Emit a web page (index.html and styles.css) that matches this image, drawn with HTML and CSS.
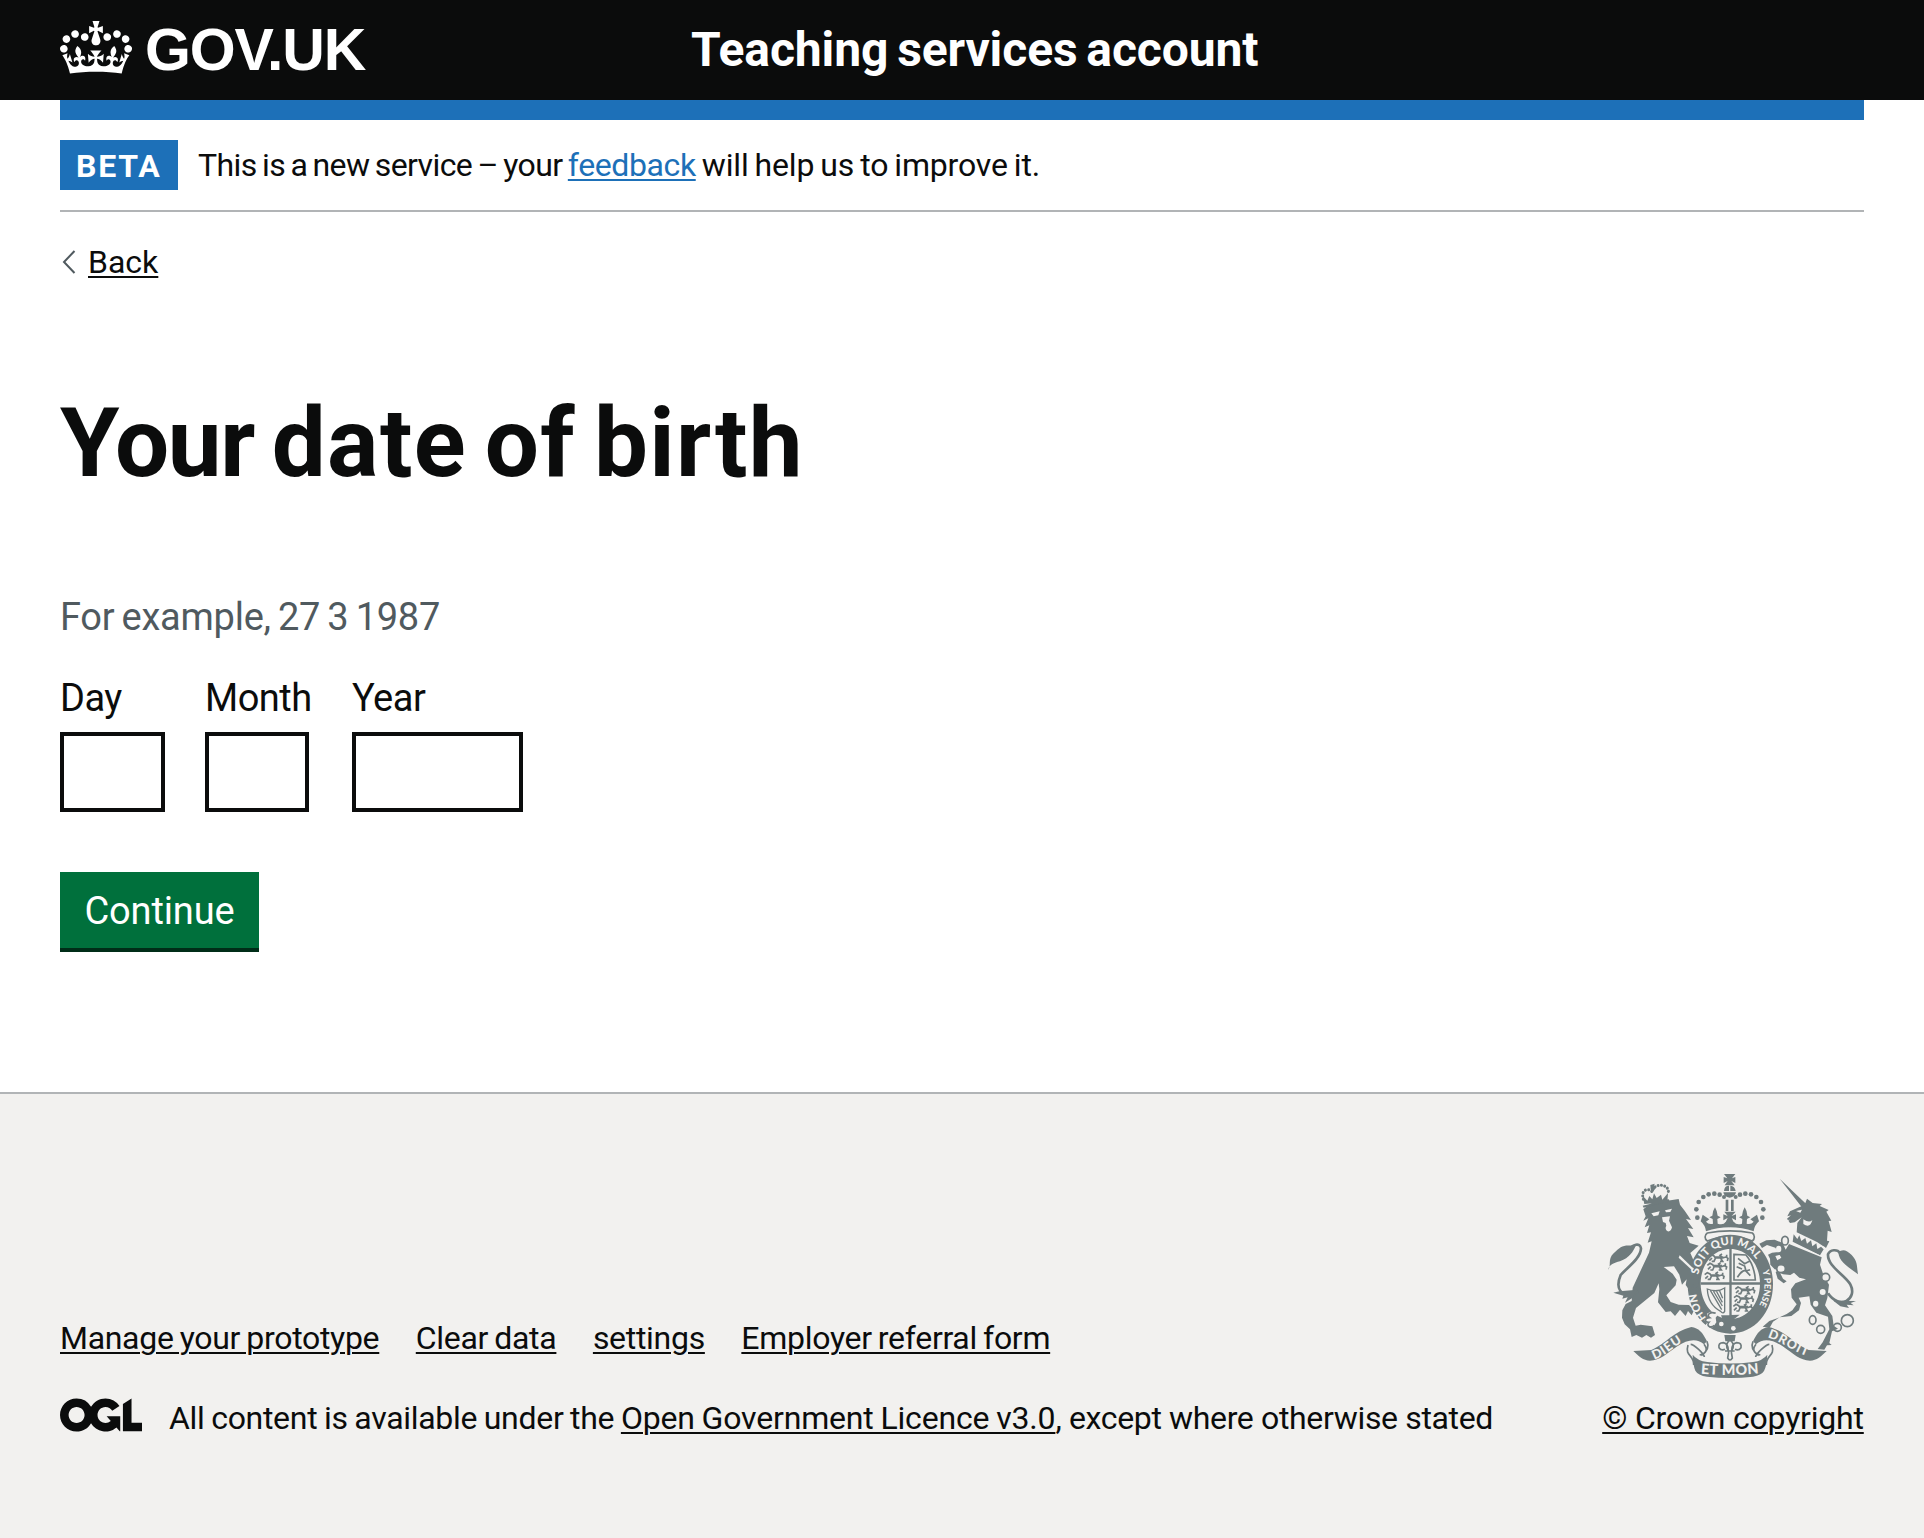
FILE: index.html
```html
<!DOCTYPE html>
<html lang="en">
<head>
<meta charset="utf-8">
<title>Your date of birth – Teaching services account</title>
<link rel="stylesheet" href="styles.css">
</head>
<body>
<header class="header">
  <a class="header-logo" href="#">
    <svg class="header-crown" viewBox="0 0 132 97" aria-hidden="true"><path d="M25 30.2c3.5 1.5 7.7-.2 9.1-3.7 1.5-3.6-.2-7.8-3.9-9.2-3.6-1.4-7.6.3-9.1 3.9-1.4 3.5.3 7.5 3.9 9zM9 39.5c3.6 1.5 7.8-.2 9.2-3.7 1.5-3.6-.2-7.8-3.9-9.1-3.6-1.5-7.6.2-9.1 3.8-1.4 3.5.3 7.5 3.8 9zM4.4 57.2c3.5 1.5 7.7-.2 9.1-3.8 1.5-3.6-.2-7.7-3.9-9.1-3.5-1.5-7.6.3-9.1 3.8-1.4 3.5.3 7.6 3.9 9.1zm38.3-21.4c3.5 1.5 7.7-.2 9.1-3.8 1.5-3.6-.2-7.7-3.9-9.1-3.6-1.5-7.6.3-9.1 3.8-1.3 3.6.4 7.7 3.9 9.1zm64.4-5.6c-3.6 1.5-7.8-.2-9.1-3.7-1.5-3.6.2-7.8 3.8-9.2 3.6-1.4 7.7.3 9.2 3.9 1.3 3.5-.4 7.5-3.9 9zm15.9 9.3c-3.6 1.5-7.7-.2-9.1-3.7-1.5-3.6.2-7.8 3.7-9.1 3.6-1.5 7.7.2 9.2 3.8 1.5 3.5-.3 7.5-3.8 9zm4.7 17.7c-3.6 1.5-7.8-.2-9.2-3.8-1.5-3.6.2-7.7 3.9-9.1 3.6-1.5 7.7.3 9.2 3.8 1.3 3.5-.4 7.6-3.9 9.1zM89.3 35.8c-3.6 1.5-7.8-.2-9.2-3.8-1.4-3.6.2-7.7 3.9-9.1 3.6-1.5 7.7.3 9.2 3.8 1.4 3.6-.3 7.7-3.9 9.1zM69.7 17.7l8.9 4.7V9.3l-8.9 2.8c-.2-.3-.5-.6-.9-.9L72.4 0H59.6l3.5 11.2c-.3.3-.6.5-.9.9l-8.8-2.8v13.1l8.8-4.7c.3.3.6.7.9.9l-5 15.4v.1c-.2.8-.4 1.6-.4 2.4 0 4.1 3.1 7.5 7 8.1h.2c.3 0 .7.1 1 .1.4 0 .7 0 1-.1h.2c4-.6 7.1-4.1 7.1-8.1 0-.8-.1-1.7-.4-2.4V34l-5.1-15.4c.4-.2.7-.6 1-.9zM66 92.8c16.9 0 32.8 1.1 47.1 3.2 4-16.9 8.9-26.7 14-33.5l-9.6-3.4c1 4.9 1.1 7.2 0 10.2-1.5-1.4-3-4.3-4.2-8.7L108.6 76c2.8-2 5-3.2 7.5-3.3-4.4 9.4-10 11.9-13.6 11.2-4.3-.8-6.3-4.6-5.6-7.9 1-4.7 5.7-5.9 8-.5 4.3-8.7-3-11.4-7.6-8.8 7.1-7.2 7.9-13.5 2.1-21.1-8 6.1-8.1 12.3-4.5 20.8-4.7-5.4-12.1-2.5-9.5 6.2 3.4-5.2 7.9-2 7.2 3.1-.6 4.3-6.4 7.8-13.5 7.2-10.3-.9-10.9-8-11.2-13.8 2.5-.5 7.1 1.8 11 7.3L80.2 60c-4.1 4.4-8 5.3-12.3 5.4 1.4-4.4 8-11.6 8-11.6H55.5s6.4 7.2 7.9 11.6c-4.2-.1-8-1-12.3-5.4l1.4 16.4c3.9-5.5 8.5-7.7 10.9-7.3-.3 5.8-.9 12.8-11.1 13.8-7.2.6-12.9-2.9-13.5-7.2-.7-5 3.8-8.3 7.1-3.1 2.7-8.7-4.6-11.6-9.4-6.2 3.7-8.5 3.6-14.7-4.6-20.8-5.8 7.6-5 13.9 2.2 21.1-4.7-2.6-11.9.1-7.7 8.8 2.3-5.5 7.1-4.2 8.1.5.7 3.3-1.3 7.1-5.7 7.9-3.5.7-9-1.8-13.5-11.2 2.5.1 4.7 1.3 7.5 3.3l-4.7-15.4c-1.2 4.4-2.7 7.2-4.3 8.7-1.1-3-.9-5.3 0-10.2l-9.5 3.4c5 6.9 9.9 16.7 14 33.5 14.8-2.1 30.8-3.2 47.7-3.2z"/></svg>
    <span class="header-logotype">GOV.UK</span>
  </a>
  <a class="header-service" href="#">Teaching services account</a>
</header>
<div class="container">
  <div class="phase">
    <strong class="tag">BETA</strong>
    <span class="phase-text">This is a new service – your <a class="link" href="#">feedback</a><span class="phase-end"> will help us to improve it.</span></span>
  </div>
  <a class="back" href="#"><svg class="back-chevron" viewBox="0 0 14 24" aria-hidden="true"><path d="M12.5 1 2 12l10.500 11"/></svg><span class="back-text">Back</span></a>
  <main>
    <h1 class="title"><span class="title-first">Your</span> date of birth</h1>
    <p class="hint">For example, 27 3 1987</p>
    <form class="form">
      <div class="dates">
        <div class="date"><label class="label" for="day">Day</label><input class="input input-day" id="day"></div>
        <div class="date"><label class="label label-month" for="month">Month</label><input class="input input-month" id="month"></div>
        <div class="date"><label class="label" for="year">Year</label><input class="input input-year" id="year"></div>
      </div>
      <button class="button" type="button">Continue</button>
    </form>
  </main>
</div>
<footer class="footer">
  <div class="footer-meta">
    <nav class="footer-nav">
      <a class="nav-link" href="#">Manage your prototype</a>
      <a class="nav-link" href="#">Clear data</a>
      <a class="nav-link" href="#">settings</a>
      <a class="nav-link" href="#">Employer referral form</a>
    </nav>
    <div class="licence">
      <svg class="ogl" viewBox="0 0 483.2 195.7" aria-hidden="true"><path d="M421.500 142.800V.1l-50.700 32.300v161.100h112.400v-50.700zm-122.300-9.600A47.120 47.120 0 0 1 221 97.800c0-26 21.100-47.100 47.100-47.100 16.700 0 31.400 8.700 39.700 21.800l42.700-27.200A97.630 97.630 0 0 0 268.100 0c-36.500 0-68.300 20.100-85.100 49.700A98 98 0 0 0 97.800 0C43.900 0 0 43.900 0 97.800s43.900 97.800 97.800 97.800c36.500 0 68.300-20.100 85.100-49.700a97.760 97.760 0 0 0 149.600 25.400l19.400 22.200h3v-87.800h-80l24.300 27.500zM97.800 145c-26 0-47.100-21.100-47.100-47.100s21.100-47.100 47.100-47.100 47.100 21.100 47.100 47.100S123.800 145 97.800 145"/></svg>
      <span class="licence-text">All content is available under the <a class="licence-link" href="#">Open Government Licence v3.0</a><span class="licence-end">, except where otherwise stated</span></span>
    </div>
  </div>
  <div class="copyright">
    <svg class="crest" viewBox="84 72 750 612" aria-hidden="true">
      <defs>
        <path id="garter-top" d="M355 374A98 113 0 0 1 547 374"/>
        <path id="garter-right" d="M460 286A98 116 0 0 1 497 507"/>
        <path id="garter-left" d="M388 512A112 120 0 0 1 351 400"/>
        <path id="ribbon-left" d="M222 628C265 616 286 580 328 569"/>
        <path id="ribbon-right" d="M562 563C602 573 639 606 694 623"/>
        <path id="ribbon-mid" d="M362 671Q450 679 540 670"/>
        <g id="leopard" fill="none" stroke="currentColor" stroke-width="5"><path d="M2 8l8-6 8 4 4 6h22l12-4v-6M12 12l-8 8M22 13l-4 9h-7M38 13l6 9h-8M52 8l8 5-2 8M44 12l-8-8 6-4M20 9h26"/></g>
        <g id="scroll"><path d="M160 603l54-3c46-20 66-56 120-69 22 3 34 16 47 43l-9 9c-22-19-50-14-80 6-32 22-52 43-82 43-20 0-35-14-50-29z"/><path d="M324 585c-10 36 18 27 17 60M332 583c10 0 40 28 41 38M372 583c14 17 4 28-13 32M381 574c9 20-3 33-17 43" fill="none" stroke="currentColor" stroke-width="5"/></g>
        <g id="crown-half"><circle cx="352" cy="203" r="7"/><circle cx="349" cy="178" r="7"/><circle cx="356" cy="156" r="7"/><circle cx="370" cy="141" r="7"/><circle cx="386" cy="133" r="7"/><circle cx="403" cy="131" r="7"/><circle cx="419" cy="134" r="7"/><circle cx="432" cy="141" r="6"/><path d="M450 216H437Q430 226 413 221L412 207 422 202 413 197Q412 184 405 172 397 184 397 197L388 202 398 207 399 221Q386 225 378 215L388 208 368 194 362 214Q376 226 378 244 412 232 450 232Z"/></g>
      </defs>
      <g class="crest-fill">
        <path d="M432 72h34l-10 13 10-4v18l-12-6 10 13h-30l9-13-12 6V81l11 4z"/>
        <path d="M432 123q1-16 15-16v16zM451 107q14 1 16 16h-16zM430 127h38q-2 14-19 16-17-2-19-16zM437 149h8v34h-8zM453 149h8v34h-8zM433 185h34l-12 13 13-5v18l-13-7 7 14h-26l7-14-13 7v-18l13 5z"/>
        <use href="#crown-half"/><use href="#crown-half" transform="matrix(-1 0 0 1 899 0)"/>
        <path d="M382 249q68-13 135 0c8 6 8 17 0 24-43-18-92-18-135 0-9-6-9-18 0-24z" fill="none" stroke="currentColor" stroke-width="5"/>
        <path fill-rule="evenodd" d="M451 254c71 0 128 64 128 149s-57 148-128 148-128-63-128-148 57-149 128-149zm0 43c-51 0-89 46-89 104s38 106 89 106 89-48 89-106-38-104-89-104z"/>
        <path d="M448 297h7v207h-7zM362 397h178v7H362zM423 496l56-2-24 19h-25z"/>
        <use href="#leopard" x="384" y="312"/><use href="#leopard" x="380" y="338"/><use href="#leopard" x="372" y="366"/>
        <use href="#leopard" x="464" y="409"/><use href="#leopard" x="460" y="435"/><use href="#leopard" x="458" y="461"/>
        <path d="M462 313l36 2c15 18 26 43 28 75h-64zM472 382c8-12 12-19 24-21l15 16M474 325l20 16 14-7M476 340l18 8 4 15 12-4M470 350l16 7" fill="none" stroke="currentColor" stroke-width="5"/>
        <path d="M382 417q29 12 52-3v70q-5 9-12 0-38-20-40-67zM391 421l34 58M400 423l27 45M409 423l18 34M418 421l10 24" fill="none" stroke="currentColor" stroke-width="4"/>
        <path class="paper" d="M381 491q20-14 34 2l-8 10 2 14-10 15-27-1 9-11-8-10 11-9z"/><path d="M407 490c-16-7-29 5-18 13-16 1-16 15-2 14-10 12 6 18 16 9" fill="none" stroke="currentColor" stroke-width="5"/>
        <circle class="paper" cx="424" cy="522" r="7"/><circle class="paper" cx="460" cy="535" r="7"/>
        <path d="M433 555h34l-3 19h-28z"/>
        <path d="M450 569q17 16 5 33 0-21 15-24 16 0 13 15-7 10-18 5M450 569q-17 16-5 33 0-21-15-24-16 0-13 15 7 10 18 5M435 603h29M446 606l-3 18q7 12 14 0l-3-18" fill="none" stroke="currentColor" stroke-width="5"/>
        <path d="M190 178l15-12 52-13 39-6 4 17 14 18 19 28-15-3 22 30-16-3 17 28-20-4 8 21 27 8-25 22 22 50 3 50-14 6-3-12-9 20-13-18 3-17-14 16-8-30-16-25-31 2 27 20 12 18-3 17-28 30 13 20 24 8 31 1 15 16-7 15-11-13-7 15-17-19-15 19-13-14-15 2-23-29 4-39-2-18-13 29-55 45-9 29 8 24 15-3 35 5 8 26-12 8-14-8-13 8-17-8-14 6-5-23-16-15-8-20 1-22 10-19 18-9 3-40 49-105 8-34-12 4 10-31-12 2 7-23-14 6 11-27-15 7 7-13z"/>
        <path class="paper" d="M214 190l25-6-4 12-14 3zM255 181l21-5-5 10-13 1zM246 202l24-3-3 13 9 20q-3 14-13 12-10-7-4-17l-2-8-8-3z"/>
        <path class="paper" d="M299 316l42 40-3 6-42-39z"/>
        <path d="M188 167l79-19 1 6-77 19zM193 162l-5-25 14 15 6-14 9 10 5-18 8 14 13-10 4 15 17-20-2 28zM211 105l13-4-2 8 8 1-5 7-6 9-7-8z"/>
        <path d="M190 148C181 118 205 113 216 125M218 118C234 94 275 108 263 133" fill="none" stroke="currentColor" stroke-width="9" stroke-dasharray=".1 10" stroke-linecap="round"/>
        <path d="M176 425c-60 23-69-14-54-50 20-23 60-50 61-80-3-19-26-11-35 3" fill="none" stroke="currentColor" stroke-width="8"/>
        <path d="M84 360c12-12-3-31 17-50 20-20 28-26 56-23l12-4c-10 24-20 40-49 51-18 5-31 8-36 26zM100 428l18-4 54-5-15 25-22 14 8-16-16 4 3-9z"/>
        <path d="M599 86l82 78-16 7zM681 146l17 13 28 3-7 6 27 12-7 5 15 27-8 1 9 33-12-4-2 30 7 2-10 20-27-18-61-29 2-28 13-17-21 15-14 2-9-13 12-10-11 3 8-15 44-20z"/>
        <path class="paper" d="M648 183l18-4-5 9zM670 208q18 12 27 2-6 26-27 12zM614 211l16-2-13 8z"/>
        <path class="paper" d="M638 249l98 43-16 27-84-37z"/><path d="M638 275l3-22 11 14 6-11 6 17 12-9 5 17 12-10 4 18 12-9 3 17 11-7 8 8-11 18z"/>
        <path d="M636 280l84 38" fill="none" stroke="#f2f1ef" stroke-width="4"/>
        <path d="M627 282l98 40-5 22 10 30 17 30-5 40-7 22 22 32 4 29 13 9-18 8-8 35 7 6-14 1-8 13-20-2 15-20 11-22 9-17-4-38-35-12-17-24-4-25-32 4 7 16-6 22-23 17-35 4-20 13-10 18-21-3 20-17 26-9 26-12 17-11 13-18-15-20-2-25 13-18 32-12-20-5-16-15-11 7-22-2-9-5 9 18 11 8-9 6-18-14-6-20 9-6-12-2-13-14-1-18-6-12 12-6 19-2 5 8-14 4 6 13 12-8-18-30-25-8-15 9-8-13 21-10 25-2 24 10 9 20z"/>
        <path d="M744 430c35 52 90 17 67-27-16-28-69-54-67-90 6-15 28-16 36-4" fill="none" stroke="currentColor" stroke-width="8"/>
        <path d="M834 373c-4-24 0-38-19-58-16-16-28-18-40-8 2 28 27 42 59 66zM760 452l68 1-16 6 9 7-21-2 7 10-26-5z"/>
        <g fill="none" stroke="currentColor" stroke-width="5"><ellipse cx="615" cy="272" rx="10" ry="13"/><ellipse class="paper" cx="603" cy="356" rx="13" ry="12"/><circle class="paper" cx="737" cy="382" r="12"/><ellipse cx="698" cy="510" rx="10" ry="13"/><circle cx="722" cy="538" r="12"/><circle cx="772" cy="532" r="12"/><circle cx="802" cy="512" r="18"/></g>
        <g class="paper"><ellipse cx="596" cy="297" rx="8" ry="10"/><circle cx="728" cy="426" r="9"/><ellipse cx="707" cy="461" rx="8" ry="9"/></g>
        <use href="#scroll"/><use href="#scroll" transform="matrix(-1 0 0 1 900 0)"/>
        <path d="M338 614q14 18 44 22 68 9 137 0 29-4 43-22-2 34-10 49-8 13-33 17-69 8-138 0-27-4-35-18-7-17-8-48z"/>
      </g>
      <g class="crest-text">
        <text><textPath href="#garter-top">SOIT QUI MAL</textPath></text>
        <text class="crest-small"><textPath href="#garter-right" startOffset="123">Y PENSE</textPath></text>
        <text><textPath href="#garter-left" startOffset="12">HON</textPath></text>
        <text class="crest-motto"><textPath href="#ribbon-left">DIEU</textPath></text>
        <text class="crest-motto"><textPath href="#ribbon-right">DROIT</textPath></text>
        <text class="crest-mon" textLength="176"><textPath href="#ribbon-mid">ET MON</textPath></text>
      </g>
    </svg>
    <a class="copyright-link" href="#">© Crown copyright</a>
  </div>
</footer>
</body>
</html>
```
FILE: styles.css
```css
* { box-sizing: border-box; }
body {
  margin: 0;
  background: #fff;
  color: #0b0c0c;
  font-family: Roboto, "Liberation Sans", sans-serif;
  font-size: 32px;
  line-height: 40px;
}
a { color: inherit; }
.header {
  display: flex;
  height: 100px;
  padding: 0 60px;
  background: #0b0c0c;
  color: #fff;
  line-height: 99px;
}
.header a { text-decoration: none; }
.header-logo { display: flex; width: 631px; }
.header-crown { width: 72px; height: 53px; margin-top: 21px; fill: #fff; }
.header-logotype {
  margin-left: 13px;
  font: bold 59px/101px "Liberation Sans", Arial, sans-serif;
  letter-spacing: -1.2px;
}
.header-service { font-size: 48px; font-weight: 700; letter-spacing: -0.1px; word-spacing: -3px; white-space: nowrap; }
.container { margin: 0 60px; border-top: 20px solid #1d70b8; }
.phase {
  display: flex;
  gap: 20px;
  margin-top: 20px;
  padding-bottom: 20px;
  border-bottom: 2px solid #b1b4b6;
  line-height: 50px;
}
.tag {
  width: 118px;
  height: 50px;
  padding: 1px 0 0 16px;
  background: #1d70b8;
  color: #fff;
  font-weight: 700;
  letter-spacing: 1.8px;
}
.phase-text { letter-spacing: -0.6px; word-spacing: -2px; }
.phase-end { letter-spacing: -0.17px; word-spacing: -1.7px; }
.link {
  color: #1d70b8;
  letter-spacing: -0.4px;
  text-decoration: underline 2px;
  text-underline-offset: 3px;
}
.back { display: flex; width: max-content; margin-top: 30px; text-decoration: none; }
.back-chevron { width: 14px; height: 24px; margin: 8px 12px 0 2px; fill: none; stroke: #505a5f; stroke-width: 2; }
.back-text, .nav-link, .licence-link, .copyright-link {
  text-decoration: underline 2px;
  text-underline-offset: 3px;
}
.title { margin: 110px 0 0; font-size: 96px; line-height: 102px; font-weight: 700; letter-spacing: 1.4px; word-spacing: -7.5px; }
.title-first { letter-spacing: -1.4px; }
.hint { margin: 97px 0 0; color: #505a5f; font-size: 38px; line-height: 52px; letter-spacing: -0.25px; word-spacing: -2px; }
.dates { display: flex; margin-top: 29px; }
.date { display: flex; flex-direction: column; }
.label { font-size: 38px; line-height: 52px; letter-spacing: -0.5px; }
.input {
  height: 80px;
  margin-top: 8px;
  padding: 0;
  border: 4px solid #0b0c0c;
  border-radius: 0;
  background: #fff;
}
.input-day { width: 105px; margin-right: 40px; }
.input-month { width: 104px; }
.label-month { width: 147px; }
.input-year { width: 171px; }
.button {
  display: block;
  width: 199px;
  height: 80px;
  margin-top: 60px;
  padding: 3px 0 0;
  border: 0;
  border-bottom: 4px solid #002d18;
  background: #00703c;
  color: #fff;
  font: 38px/73px Roboto, "Liberation Sans", sans-serif;
  letter-spacing: -0.15px;
}
.footer {
  display: flex;
  justify-content: space-between;
  align-items: flex-end;
  height: 446px;
  margin-top: 140px;
  padding: 0 60px 100px;
  border-top: 2px solid #b1b4b6;
  background: #f2f1ef;
}
.footer-nav { display: flex; gap: 36.5px; margin-bottom: 40px; letter-spacing: -0.3px; word-spacing: -1.5px; }
.licence { display: flex; }
.ogl { width: 82px; height: 34px; margin-right: 27px; fill: #0b0c0c; }
.licence-text { letter-spacing: -0.3px; word-spacing: -1px; }
.licence-link { letter-spacing: -0.17px; }
.licence-end { letter-spacing: -0.35px; word-spacing: 0; }
.copyright { display: flex; flex-direction: column; align-items: center; width: 262px; }
.copyright-link { letter-spacing: -0.2px; white-space: nowrap; }
.crest { width: 250px; height: 204px; margin-bottom: 20px; color: #6f7b7d; }
.crest-fill { fill: #6f7b7d; }
.paper { fill: #f2f1ef; }
.crest-text { fill: #f2f1ef; font: 900 33px Lato, sans-serif; letter-spacing: 1.2px; }
.crest-small { font-size: 27px; letter-spacing: 0; }
.crest-motto { font-size: 38px; letter-spacing: 3px; }
.crest-mon { font-size: 43px; }
```
